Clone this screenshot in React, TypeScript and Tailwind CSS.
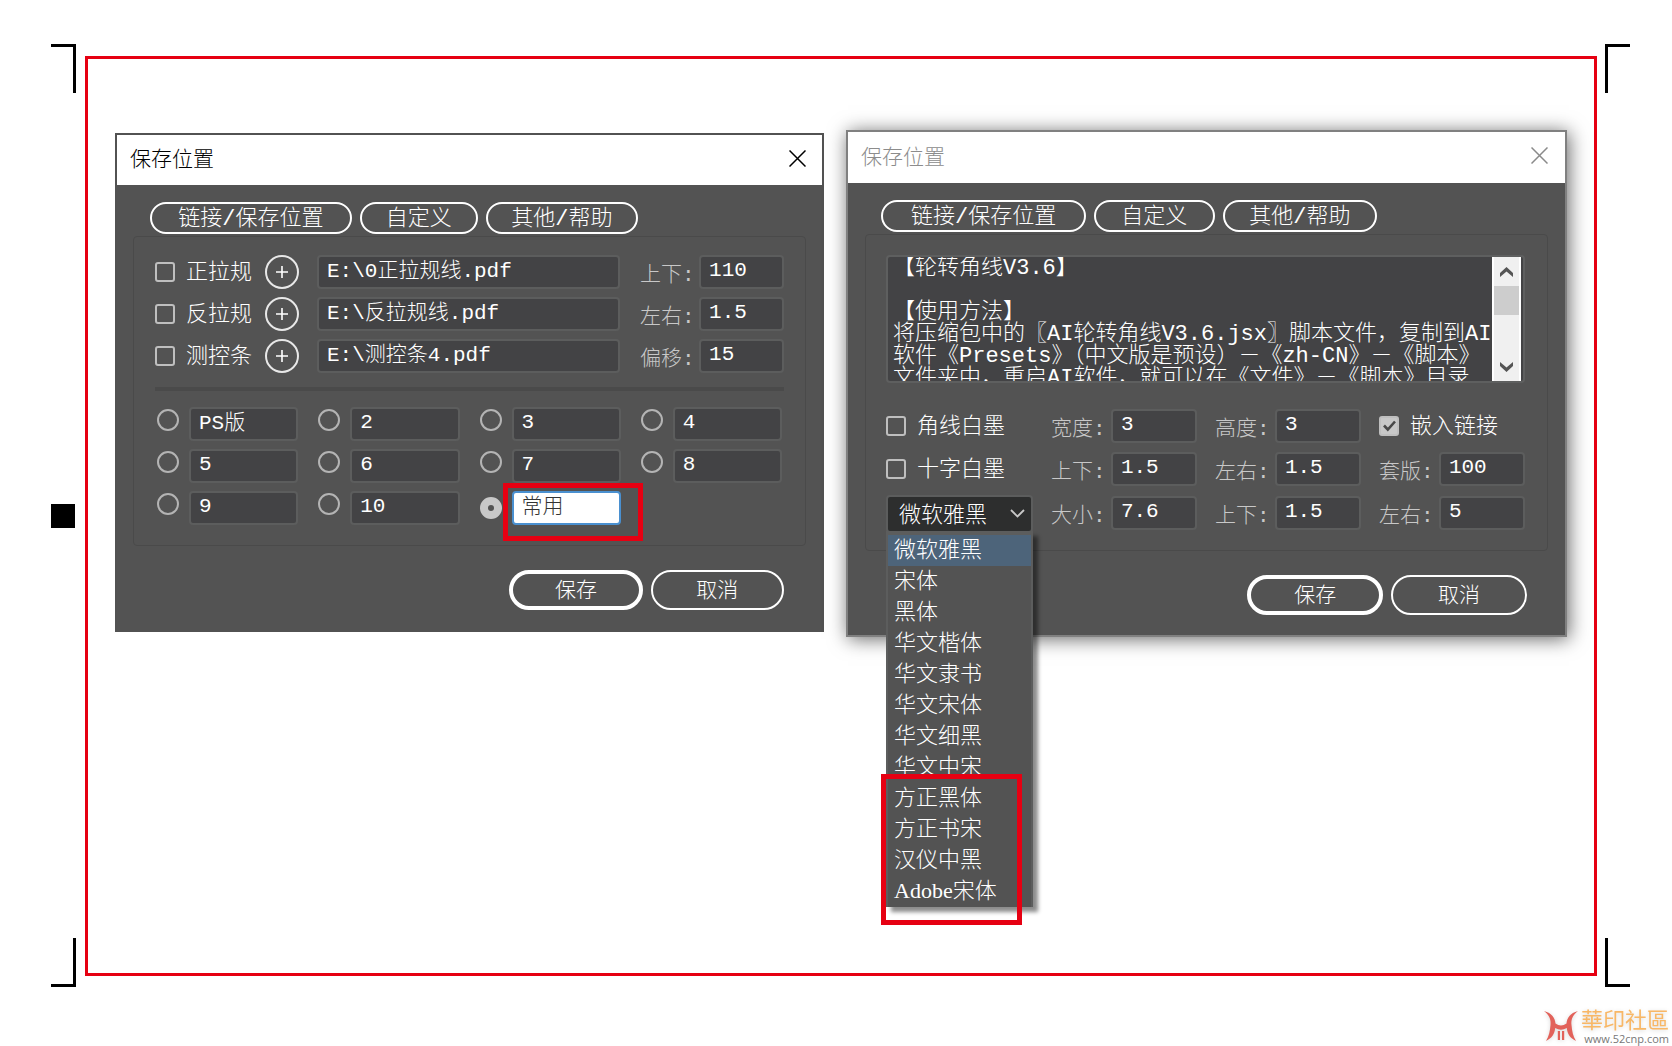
import React, { useState } from 'react';

interface DialogProps {
    title: string;
    active: boolean;
    className: string;
    children: React.ReactNode;
}

interface FileRow {
    id: string;
    label: string;
    path: string;
    numLabel: string;
    num: string;
}

const FILE_ROWS: FileRow[] = [
    { id: 'front', label: '正拉规', path: 'E:\\0正拉规线.pdf', numLabel: '上下:', num: '110' },
    { id: 'back', label: '反拉规', path: 'E:\\反拉规线.pdf', numLabel: '左右:', num: '1.5' },
    { id: 'bar', label: '测控条', path: 'E:\\测控条4.pdf', numLabel: '偏移:', num: '15' },
];

const PRESETS = ['PS版', '2', '3', '4', '5', '6', '7', '8', '9', '10', '常用'];

const FONTS = [
    '微软雅黑',
    '宋体',
    '黑体',
    '华文楷体',
    '华文隶书',
    '华文宋体',
    '华文细黑',
    '华文中宋',
    '方正黑体',
    '方正书宋',
    '汉仪中黑',
    'Adobe宋体',
];

const HELP_TEXT = `【轮转角线V3.6】

【使用方法】
将压缩包中的〖AI轮转角线V3.6.jsx〗脚本文件，复制到AI
软件《Presets》（中文版是预设）－《zh-CN》－《脚本》
文件夹中，重启AI软件，就可以在《文件》－《脚本》目录`;

const inputBase = 'h-[34px] min-w-0 rounded border-2 px-2 text-[21px] leading-6 focus:outline-none';
const darkInput = 'border-[#5c5d5d] bg-[#434345] text-white';

// CJK glyphs sit lower in the line box than plain digits
const hasCjk = (text: string) => /[\u4e00-\u9fff]/.test(text);

function Dialog({ title, active, className, children }: DialogProps) {
    return (
        <section className={`border-2 bg-[#535353] ${className}`}>
            <header
                className={`flex items-center justify-between bg-white pl-[13px] ${active ? 'h-[50px] pr-4' : 'h-[51px] pr-[17px]'}`}
            >
                <h2 className={`pt-0.5 text-[21px] leading-7 ${active ? 'text-black' : 'text-[#8c8c8c]'}`}>{title}</h2>
                <button aria-label="关闭" className={`mb-1 ${active ? 'text-black' : 'text-[#8a8a8a]'}`}>
                    <svg width="17" height="17" viewBox="0 0 17 17" fill="none" stroke="currentColor" strokeWidth="1.5">
                        <path d="M0.5 0.5 L16.5 16.5 M16.5 0.5 L0.5 16.5" />
                    </svg>
                </button>
            </header>
            {children}
        </section>
    );
}

function Tabs() {
    const tab = 'h-8 whitespace-nowrap rounded-full border-2 border-white pt-1 text-[22px] leading-6 text-white';
    return (
        <nav className="flex gap-2 pl-[33px] pt-[17px]">
            <button className={`${tab} w-[30%]`}>链接/保存位置</button>
            <button className={`${tab} w-[17.6%]`}>自定义</button>
            <button className={`${tab} w-[22.6%]`}>其他/帮助</button>
        </nav>
    );
}

function Actions() {
    const button = 'h-10 w-1/5 rounded-[20px] border-white pt-1 text-[21px] leading-6 text-white';
    return (
        <div className="flex justify-end gap-2 pb-5 pr-[38px] pt-6">
            <button className={`${button} border-4`}>保存</button>
            <button className={`${button} border-2`}>取消</button>
        </div>
    );
}

function Check({ label, defaultChecked = false }: { label: string; defaultChecked?: boolean }) {
    return (
        <label className="relative flex items-center gap-[11px] whitespace-nowrap text-[22px] text-white">
            <input
                type="checkbox"
                defaultChecked={defaultChecked}
                className="peer size-5 shrink-0 appearance-none rounded-[3px] border-2 border-[#bfbfbf] checked:bg-[#c8c8c8]"
            />
            <svg
                className="pointer-events-none absolute left-1 hidden peer-checked:block"
                width="13"
                height="12"
                viewBox="0 0 13 12"
                fill="none"
                stroke="#484848"
                strokeWidth="2.6"
            >
                <path d="M1 5.5 L4.8 9.5 L12 1.5" />
            </svg>
            <span className="pt-1 leading-7">{label}</span>
        </label>
    );
}

function NumberField({ label, value }: { label: string; value: string }) {
    return (
        <label className="flex items-center justify-between whitespace-nowrap text-[21px] text-[#c8c8c8]">
            <span className="pt-2 leading-[26px]">{label}</span>
            <input defaultValue={value} className={`${inputBase} ${darkInput} w-[59%] pb-1`} />
        </label>
    );
}

function SaveDialog() {
    const [preset, setPreset] = useState('常用');

    return (
        <Dialog title="保存位置" active className="mt-[3px] border-[#525252]">
            <Tabs />
            <div className="mx-4 mt-0.5 rounded-sm border border-[#4a4a4a] px-[21px] pb-5 pt-[18px]">
                <div className="flex flex-col gap-2">
                    {FILE_ROWS.map((row) => (
                        <div key={row.id} className="flex items-center">
                            <div className="w-[110px]">
                                <Check label={row.label} />
                            </div>
                            <button
                                aria-label={`选择${row.label}文件`}
                                className="flex size-[34px] items-center justify-center rounded-full border-2 border-[#e8e8e8] text-white"
                            >
                                <svg width="12" height="12" viewBox="0 0 12 12" stroke="currentColor" strokeWidth="1.6">
                                    <path d="M6 0 V12 M0 6 H12" />
                                </svg>
                            </button>
                            <input
                                aria-label={`${row.label}路径`}
                                defaultValue={row.path}
                                className={`${inputBase} ${darkInput} ml-[18px] mr-5 flex-1 pb-2`}
                            />
                            <div className="w-[144px]">
                                <NumberField label={row.numLabel} value={row.num} />
                            </div>
                        </div>
                    ))}
                </div>

                <hr className="mb-4 mt-[14px] h-1 border-0 bg-[#4a4a4a]" />

                <div className="mx-0.5 grid grid-cols-4 gap-x-5 gap-y-2">
                    {PRESETS.map((name) => {
                        const isSelected = preset === name;
                        return (
                            <div key={name} className="flex items-center gap-[10px]">
                                <input
                                    type="radio"
                                    name="preset"
                                    aria-label={name}
                                    checked={isSelected}
                                    onChange={() => setPreset(name)}
                                    className="mb-2 size-[22px] shrink-0 appearance-none rounded-full border-2 border-[#b4b4b4] checked:mb-0 checked:border-8 checked:border-[#c8c8c8]"
                                />
                                <div className="relative flex min-w-0 flex-1">
                                    <input
                                        aria-label={`预设${name}`}
                                        defaultValue={name}
                                        className={`${inputBase} w-full ${hasCjk(name) ? 'pb-2' : 'pb-1'} ${
                                            isSelected ? 'border-[#4a90d0] bg-white text-[#333333]' : darkInput
                                        }`}
                                    />
                                    {name === '常用' && (
                                        <div className="pointer-events-none absolute -bottom-4 -left-[9px] -right-[22px] -top-2 border-5 border-[#e60012]"></div>
                                    )}
                                </div>
                            </div>
                        );
                    })}
                </div>
            </div>
            <Actions />
        </Dialog>
    );
}

function HelpBox() {
    return (
        <div className="flex h-32 rounded border-2 border-[#5e5f5f] bg-[#434345] pr-0.5">
            <textarea
                readOnly
                aria-label="使用方法"
                value={HELP_TEXT}
                className="min-w-0 flex-1 resize-none overflow-hidden whitespace-pre pl-[5px] pt-px text-[22px] leading-[22px] text-white focus:outline-none"
            />
            <div className="flex w-[29px] flex-col border-x-2 border-white bg-[#f0f0f0] text-[#555555]">
                <button aria-label="向上滚动" className="flex h-[29px] items-center justify-center">
                    <svg width="13" height="10" viewBox="0 0 13 10" fill="currentColor">
                        <path d="M6.5 0 L13 6 V10 L6.5 4.5 L0 10 V6 Z" />
                    </svg>
                </button>
                <div className="h-[29px] bg-[#cdcdcd]"></div>
                <button aria-label="向下滚动" className="mt-auto flex h-[29px] items-center justify-center">
                    <svg width="13" height="10" viewBox="0 0 13 10" fill="currentColor">
                        <path d="M6.5 10 L13 4 V0 L6.5 5.5 L0 0 V4 Z" />
                    </svg>
                </button>
            </div>
        </div>
    );
}

function FontPicker() {
    const [font, setFont] = useState(FONTS[0]);

    return (
        <div className="relative h-9 text-[22px] text-white">
            <select
                aria-label="字体"
                value={font}
                onChange={(e) => setFont(e.target.value)}
                className="h-[38px] w-full appearance-none rounded border-2 border-[#5c5d5d] bg-[#2d2e2e] pl-[11px] pt-1 leading-8 focus:outline-none"
            >
                {FONTS.map((f) => (
                    <option key={f} value={f}>
                        {f}
                    </option>
                ))}
            </select>
            <svg
                className="pointer-events-none absolute right-2 top-[14px]"
                width="15"
                height="9"
                viewBox="0 0 15 9"
                fill="none"
                stroke="#c8c8c8"
                strokeWidth="1.8"
            >
                <path d="M1 1 L7.5 7.5 L14 1" />
            </svg>
            <div className="absolute left-0 top-9 z-10 w-full">
                <ul
                    role="listbox"
                    aria-label="字体列表"
                    className="border-x-2 border-t-4 border-[#5c5d5d] bg-[#535353] font-['Liberation_Serif','Noto_Sans_CJK_SC',serif] shadow-[5px_5px_4px_rgba(0,0,0,0.45)]"
                >
                    {FONTS.map((f) => (
                        <li
                            key={f}
                            role="option"
                            aria-selected={f === font}
                            onClick={() => setFont(f)}
                            className={`h-[31px] pl-[6px] leading-[30px] ${f === font ? 'bg-[#4d647a]' : ''}`}
                        >
                            {f}
                        </li>
                    ))}
                </ul>
                <div className="pointer-events-none absolute -bottom-[18px] -left-[5px] right-[11px] h-[151px] border-5 border-[#e60012]"></div>
            </div>
        </div>
    );
}

function HelpDialog() {
    return (
        <Dialog title="保存位置" active={false} className="border-[#808080] shadow-[2px_2px_18px_rgba(0,0,0,0.6)]">
            <Tabs />
            <div className="mx-[17px] mt-0.5 rounded-sm border border-[#4a4a4a] pb-[19px] pl-5 pr-[22px] pt-5">
                <HelpBox />
                <div className="mt-[26px] grid grid-cols-[147px_1fr_1fr_1fr] gap-x-[18px] gap-y-[9px]">
                    <Check label="角线白墨" />
                    <NumberField label="宽度:" value="3" />
                    <NumberField label="高度:" value="3" />
                    <Check label="嵌入链接" defaultChecked />

                    <Check label="十字白墨" />
                    <NumberField label="上下:" value="1.5" />
                    <NumberField label="左右:" value="1.5" />
                    <NumberField label="套版:" value="100" />

                    <FontPicker />
                    <NumberField label="大小:" value="7.6" />
                    <NumberField label="上下:" value="1.5" />
                    <NumberField label="左右:" value="5" />
                </div>
            </div>
            <Actions />
        </Dialog>
    );
}

function CropMarks() {
    return (
        <>
            <div className="absolute left-0 top-0 h-[49px] w-[25px] border-r-3 border-t-3 border-black"></div>
            <div className="absolute right-0 top-0 h-[49px] w-[25px] border-l-3 border-t-3 border-black"></div>
            <div className="absolute bottom-0 left-0 h-[49px] w-[25px] border-b-3 border-r-3 border-black"></div>
            <div className="absolute bottom-0 right-0 h-[49px] w-[25px] border-b-3 border-l-3 border-black"></div>
            <div className="absolute left-0 top-1/2 size-6 -translate-y-1/2 bg-black"></div>
        </>
    );
}

function Watermark() {
    return (
        <footer className="flex h-[59px] items-end justify-end gap-[3px] pr-[3px] font-normal">
            <svg className="mb-1 drop-shadow-sm" width="34" height="32" viewBox="0 0 34 32" fill="#e2625a">
                <path d="M0 1 C8 3 11 8 11.5 13.5 Q17 17.5 22.5 13.5 C23 8 26 3 34 1 C28 6 27 10 27.5 15 C28 21 29 26 32 31 C26 28 23.5 24 22.8 18 Q17 21.5 11.2 18 C10.5 24 8 28 2 31 C5 26 6 21 6.5 15 C7 10 6 6 0 1 Z" />
                <path d="M13.8 21 H16 V30 H13.8 Z M18 21 H20.2 V30 H18 Z" />
            </svg>
            <div className="flex flex-col items-end">
                <span className="font-['Noto_Sans_CJK_TC',sans-serif] text-[22px] leading-7 text-[#f8b766] drop-shadow-sm">華印社區</span>
                <span className="font-['Open_Sans',sans-serif] text-[11px] leading-[14px] text-[#777777]">www.52cnp.com</span>
            </div>
        </footer>
    );
}

export default function App() {
    return (
        <div className="flex min-h-screen flex-col bg-white pt-11 font-['Liberation_Mono','Noto_Sans_CJK_SC',monospace] font-light">
            <div className="flex w-full flex-1 flex-col pl-[51px] pr-[42px]">
                <div className="relative flex flex-1 flex-col pb-[11px] pl-[34px] pr-[33px] pt-3">
                    <CropMarks />
                    <main className="grid flex-1 grid-cols-[709fr_721fr] items-start gap-[22px] border-3 border-[#e60012] px-[27px] pt-[71px]">
                        <SaveDialog />
                        <HelpDialog />
                    </main>
                </div>
            </div>
            <Watermark />
        </div>
    );
}
